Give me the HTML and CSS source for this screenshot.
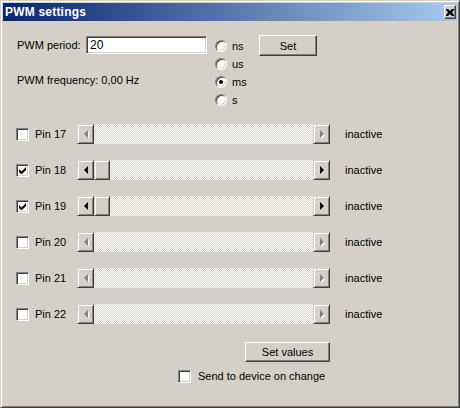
FILE: index.html
```html
<!DOCTYPE html>
<html>
<head>
<meta charset="utf-8">
<link rel="stylesheet" href="styles.css">
</head>
<body>
<div class="window">
  <div class="titlebar">
    <span class="title">PWM settings</span>
    <span class="close"><svg width="8" height="7" viewBox="0 0 8 7"><path d="M0 0h2l2 2 2-2h2v1L6 3.5 8 6v1H6L4 5 2 7H0V6l2-2.5L0 1z" fill="#000"/></svg></span>
  </div>
  <div class="top">
    <div class="left">
      <div class="period-row">
        <span class="period-label">PWM period:</span>
        <div class="input">20</div>
      </div>
      <div class="freq">PWM frequency: 0,00 Hz</div>
    </div>
    <div class="radios">
      <div class="radio-row"><span class="radio"></span><span>ns</span></div>
      <div class="radio-row"><span class="radio"></span><span>us</span></div>
      <div class="radio-row"><span class="radio checked"></span><span>ms</span></div>
      <div class="radio-row"><span class="radio"></span><span>s</span></div>
    </div>
    <div class="btn set-btn">Set</div>
  </div>

  <div class="pins">
    <div class="pin-row">
      <span class="check"></span><span class="pin-label">Pin 17</span>
      <div class="scroll disabled"><span class="arrow left"><i></i></span><span class="trough"></span><span class="arrow right"><i></i></span></div>
      <span class="status">inactive</span>
    </div>
    <div class="pin-row">
      <span class="check on"><svg width="7" height="7" viewBox="0 0 7 7"><path d="M0 2v3l2 2h1l4-4V0L2.5 4.5z" fill="#000"/></svg></span><span class="pin-label">Pin 18</span>
      <div class="scroll"><span class="arrow left"><i></i></span><span class="thumb"></span><span class="trough"></span><span class="arrow right"><i></i></span></div>
      <span class="status">inactive</span>
    </div>
    <div class="pin-row">
      <span class="check on"><svg width="7" height="7" viewBox="0 0 7 7"><path d="M0 2v3l2 2h1l4-4V0L2.5 4.5z" fill="#000"/></svg></span><span class="pin-label">Pin 19</span>
      <div class="scroll"><span class="arrow left"><i></i></span><span class="thumb"></span><span class="trough"></span><span class="arrow right"><i></i></span></div>
      <span class="status">inactive</span>
    </div>
    <div class="pin-row">
      <span class="check"></span><span class="pin-label">Pin 20</span>
      <div class="scroll disabled"><span class="arrow left"><i></i></span><span class="trough"></span><span class="arrow right"><i></i></span></div>
      <span class="status">inactive</span>
    </div>
    <div class="pin-row">
      <span class="check"></span><span class="pin-label">Pin 21</span>
      <div class="scroll disabled"><span class="arrow left"><i></i></span><span class="trough"></span><span class="arrow right"><i></i></span></div>
      <span class="status">inactive</span>
    </div>
    <div class="pin-row">
      <span class="check"></span><span class="pin-label">Pin 22</span>
      <div class="scroll disabled"><span class="arrow left"><i></i></span><span class="trough"></span><span class="arrow right"><i></i></span></div>
      <span class="status">inactive</span>
    </div>
  </div>

  <div class="btn setvalues-btn">Set values</div>
  <div class="send-row"><span class="check"></span><span>Send to device on change</span></div>
</div>
</body>
</html>
```
FILE: styles.css
```css
html, body {
  margin: 0;
  padding: 0;
  background: #d4d0c8;
}
body {
  font-family: "Liberation Sans", Arial, sans-serif;
  font-size: 11px;
  color: #000;
}
.window {
  width: 460px;
  height: 408px;
  box-sizing: border-box;
  border: 1px solid;
  border-color: #d4d0c8 #404040 #404040 #d4d0c8;
  box-shadow: inset 1px 1px #fff, inset -1px -1px #808080;
  padding: 2px;
  background: #d4d0c8;
}
.titlebar {
  height: 18px;
  background: linear-gradient(to right, #0a246a, #a6caf0);
  display: flex;
  align-items: center;
  justify-content: space-between;
  padding-left: 2px;
}
.title {
  color: #fff;
  font-weight: bold;
  font-size: 12px;
  letter-spacing: 0.2px;
}
.close {
  width: 12px;
  height: 14px;
  box-sizing: border-box;
  margin-right: 1px;
  background: #d4d0c8;
  border: 1px solid;
  border-color: #fff #404040 #404040 #fff;
  box-shadow: inset -1px -1px #808080;
  display: flex;
  align-items: center;
  justify-content: center;
}
.top {
  display: flex;
  align-items: flex-start;
  padding: 14px 0 0 14px;
  height: 74px;
}
.left {
  width: 198px;
}
.period-row {
  display: flex;
  align-items: center;
  margin-top: 1px;
  height: 18px;
}
.period-label {
  width: 69px;
}
.input {
  width: 121px;
  height: 18px;
  box-sizing: border-box;
  background: #fff;
  border: 1px solid;
  border-color: #808080 #fff #fff #808080;
  box-shadow: inset 1px 1px #404040, inset -1px -1px #d4d0c8;
  padding: 2px 0 0 3px;
  font-size: 12px;
  line-height: 13px;
}
.freq {
  margin-top: 20px;
}
.radios {
  margin-top: 2px;
  width: 44px;
}
.radio-row {
  height: 18px;
  display: flex;
  align-items: center;
  gap: 5px;
}
.radio {
  width: 12px;
  height: 12px;
  box-sizing: border-box;
  border-radius: 50%;
  border: 1px solid;
  border-color: #808080 #fff #fff #808080;
  box-shadow: inset 1px 1px #404040, inset -1px -1px #d4d0c8;
  background: #fff;
  display: flex;
  align-items: center;
  justify-content: center;
}
.radio.checked::after {
  content: "";
  width: 4px;
  height: 4px;
  border-radius: 50%;
  background: #000;
}
.btn {
  box-sizing: border-box;
  background: #d4d0c8;
  border: 1px solid;
  border-color: #fff #404040 #404040 #fff;
  box-shadow: inset -1px -1px #808080;
  display: flex;
  align-items: center;
  justify-content: center;
}
.set-btn {
  width: 58px;
  height: 21px;
}
.pins {
  margin-top: 7px;
  padding-left: 13px;
}
.pin-row {
  height: 36px;
  display: flex;
  align-items: center;
}
.check {
  width: 13px;
  height: 13px;
  box-sizing: border-box;
  background: #fff;
  border: 1px solid;
  border-color: #808080 #fff #fff #808080;
  box-shadow: inset 1px 1px #404040, inset -1px -1px #d4d0c8;
  display: flex;
  align-items: center;
  justify-content: center;
  flex: none;
}
.pin-label {
  margin-left: 6px;
  width: 42px;
}
.scroll {
  width: 253px;
  height: 20px;
  display: flex;
}
.arrow {
  width: 17px;
  height: 20px;
  box-sizing: border-box;
  background: #d4d0c8;
  border: 1px solid;
  border-color: #d4d0c8 #404040 #404040 #d4d0c8;
  box-shadow: inset 1px 1px #fff, inset -1px -1px #808080;
  display: flex;
  align-items: center;
  justify-content: center;
  flex: none;
}
.arrow i {
  width: 0;
  height: 0;
  border-top: 4px solid transparent;
  border-bottom: 4px solid transparent;
}
.arrow.left i {
  border-right: 4px solid #000;
}
.arrow.right i {
  border-left: 4px solid #000;
}
.disabled .arrow.left i {
  border-right-color: #808080;
  filter: drop-shadow(1px 1px 0 #fff);
}
.disabled .arrow.right i {
  border-left-color: #808080;
  filter: drop-shadow(1px 1px 0 #fff);
}
.thumb {
  width: 16px;
  height: 20px;
  box-sizing: border-box;
  background: #d4d0c8;
  border: 1px solid;
  border-color: #d4d0c8 #404040 #404040 #d4d0c8;
  box-shadow: inset 1px 1px #fff, inset -1px -1px #808080;
  flex: none;
}
.trough {
  flex: 1;
  background: repeating-conic-gradient(#d4d0c8 0 25%, #fff 0 50%) 0 0 / 2px 2px;
}
.status {
  margin-left: 15px;
}
.setvalues-btn {
  margin: 10px 0 0 242px;
  width: 85px;
  height: 20px;
}
.send-row {
  margin: 7px 0 0 175px;
  display: flex;
  align-items: center;
  gap: 7px;
  height: 14px;
}
```
